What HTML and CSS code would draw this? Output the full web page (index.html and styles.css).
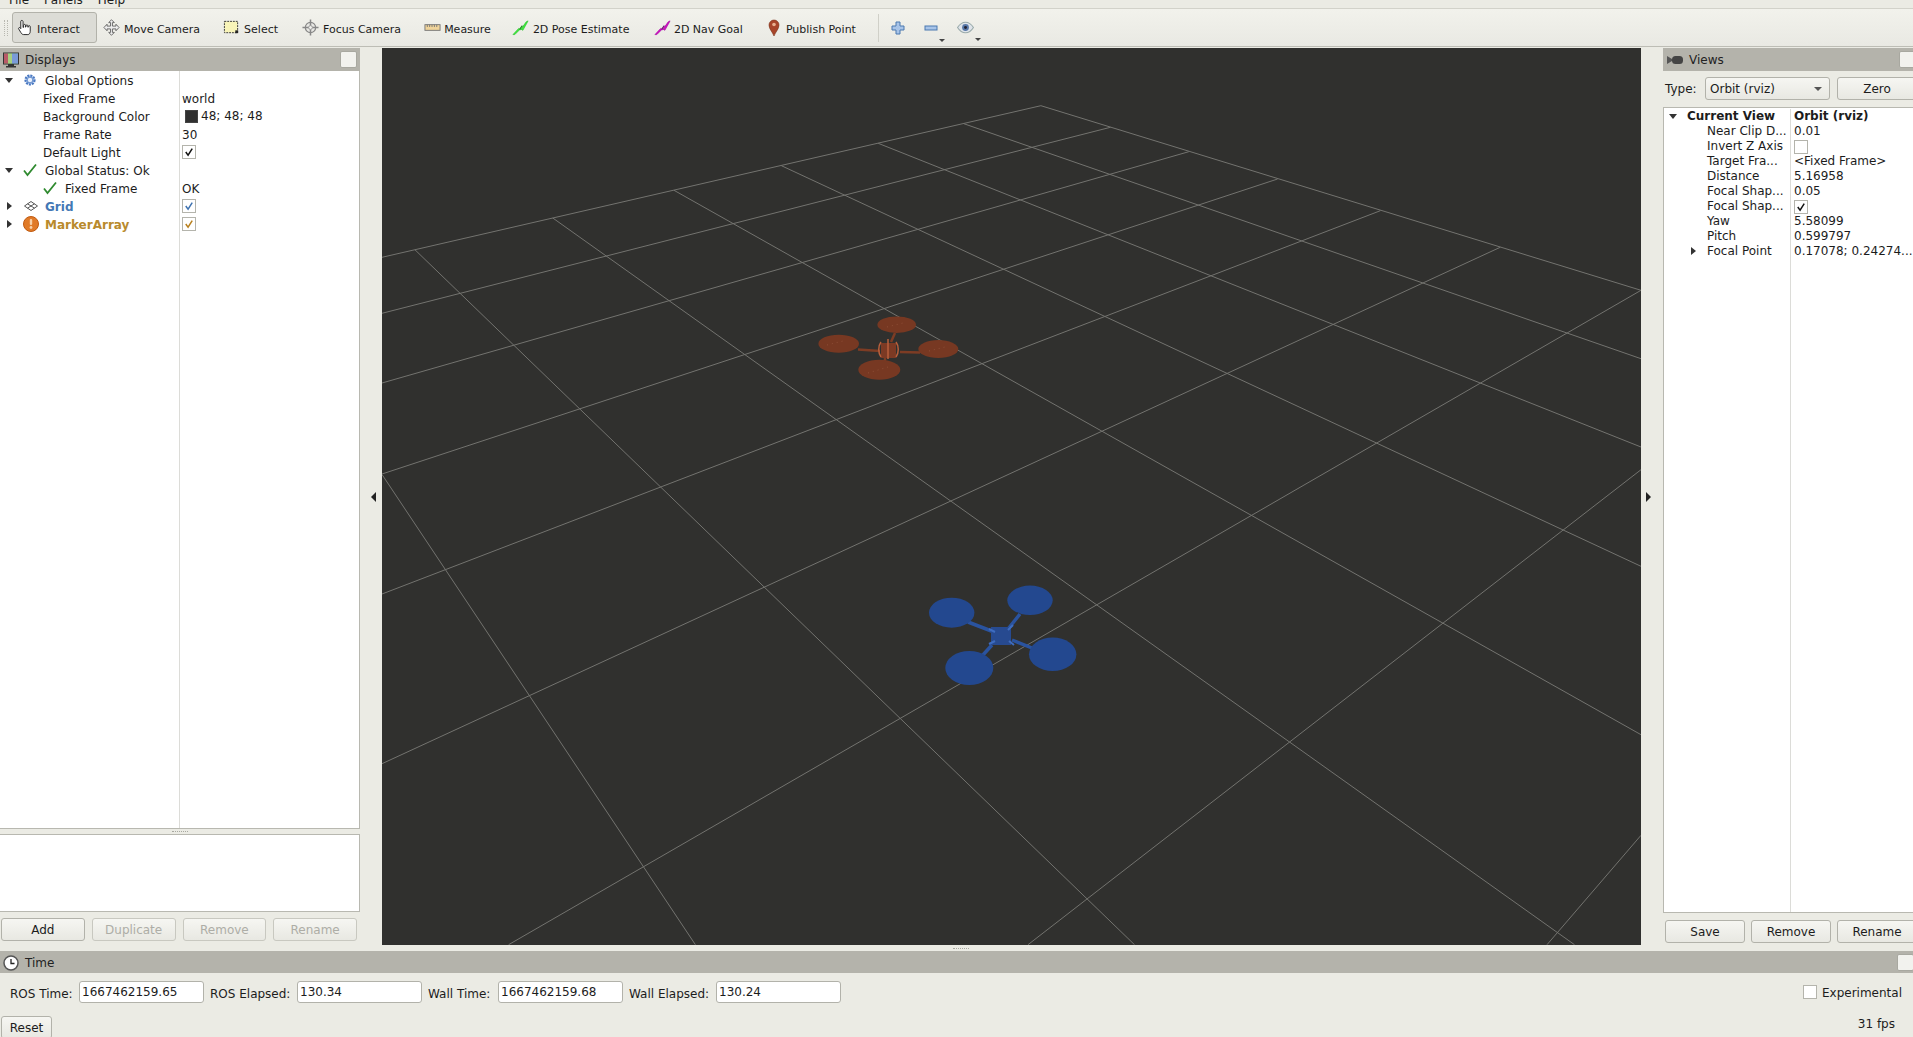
FILE: index.html
```html
<!DOCTYPE html>
<html lang="en">
<head>
<meta charset="utf-8">
<title>RViz</title>
<link rel="stylesheet" href="styles.css">
</head>
<body>
<div class="app">
  <div class="menubar">
    <div class="menu-inner"><span class="menu-item">File</span><span class="menu-item">Panels</span><span class="menu-item">Help</span></div>
  </div>
  <div class="toolbar">
    <div class="grip"></div>
    <div class="tool tool-active">
      <svg class="ico" viewBox="0 0 18 18"><path d="M5 1.500c1 0 1.400.6 1.400 1.500v6l.6-.2V6.600c0-1.200 2-1.200 2 0v2l.5-.1V7.200c0-1.200 2-1.200 2 0v1.500l.5-.1V8c0-1.200 2-1.200 2 0v5c0 2-1 3.500-2.500 3.500H7c-1.500 0-2.200-1-3-2.300L1.800 10.500c-.6-1.200.8-2 1.700-1L4 10.200V3c0-1 .2-1.500 1-1.500z" fill="#fff" stroke="#222" stroke-width="1"/></svg>
      <span>Interact</span>
    </div>
    <div class="tool tool-tight">
      <svg class="ico" viewBox="0 0 18 18"><path d="M9 .8l3 3h-2v3.700h3.700v-2l3.300 3.500-3.300 3.500v-2H10v3.700h2l-3 3-3-3h2v-3.700H4.300v2L1 9l3.300-3.500v2H8V3.800H6z" fill="#eee" stroke="#666" stroke-width="1"/></svg>
      <span>Move Camera</span>
    </div>
    <div class="tool">
      <svg class="ico" viewBox="0 0 18 18"><rect x="1.500" y="2.500" width="14" height="12" fill="#f8f4b8" stroke="#333" stroke-dasharray="2 1"/><rect x="13" y="12" width="3" height="3" fill="#222"/></svg>
      <span>Select</span>
    </div>
    <div class="tool tool-focus">
      <svg class="ico" viewBox="0 0 18 18"><circle cx="9" cy="9" r="5.500" fill="#e8e8e4" stroke="#888" stroke-width="1.300"/><path d="M9 .5v17M.5 9h17" stroke="#888" stroke-width="1.600"/><circle cx="9" cy="9" r="2" fill="#f4f4f0" stroke="#999"/></svg>
      <span>Focus Camera</span>
    </div>
    <div class="tool tool-short">
      <svg class="ico" viewBox="0 0 18 18"><rect x="1" y="6" width="16" height="6" fill="#f0d49a" stroke="#777"/><path d="M3.500 6v2.500M6 6v2.500M8.500 6v2.500M11 6v2.500M13.500 6v2.500" stroke="#777"/></svg>
      <span>Measure</span>
    </div>
    <div class="tool tool-pose">
      <svg class="ico" viewBox="0 0 18 18"><path d="M1 16.500L7 10l2 1.500L15 3l2-1-1 2-4.500 8L9 10.500 3 16.500z" fill="#3fe83f" stroke="#22c022" stroke-width=".6"/><path d="M8 11l3-4" stroke="#128a12" stroke-width="1.200"/></svg>
      <span>2D Pose Estimate</span>
    </div>
    <div class="tool tool-short tool-nav">
      <svg class="ico" viewBox="0 0 18 18"><path d="M1 16.500L7 10l2 1.500L15 3l2-1-1 2-4.500 8L9 10.500 3 16.500z" fill="#d010c0" stroke="#a000a0" stroke-width=".6"/><path d="M8 11l3-4" stroke="#700070" stroke-width="1.200"/></svg>
      <span>2D Nav Goal</span>
    </div>
    <div class="tool tool-pin">
      <svg class="ico-pin" viewBox="0 0 12 18"><path d="M6 17C4.500 13 1 10 1 6a5 5 0 0 1 10 0c0 4-3.500 7-5 11z" fill="#a8452a" stroke="#7a3018" stroke-width=".6"/><circle cx="6" cy="5.500" r="1.800" fill="#e8b090"/></svg>
      <span>Publish Point</span>
    </div>
    <div class="tool-sep"></div>
    <div class="small-tools">
      <svg class="ico-small" viewBox="0 0 14 14"><path d="M5 1h4v4h4v4H9v4H5V9H1V5h4z" fill="#a8c4e8" stroke="#4a78b0"/></svg>
      <div class="drop">
        <svg class="ico-small" viewBox="0 0 14 14"><rect x="1" y="5" width="12" height="4" fill="#a8c4e8" stroke="#4a78b0"/></svg>
        <span class="caret"></span>
      </div>
      <div class="drop">
        <svg class="ico-eye" viewBox="0 0 16 12"><path d="M.5 6C3 2 5.500 1 8 1s5 1 7.500 5c-2.500 4-5 5-7.500 5S3 10 .5 6z" fill="#dfe4ea" stroke="#9aa"/><circle cx="8" cy="6" r="3.200" fill="#5878a8"/><circle cx="8" cy="6" r="1.400" fill="#223"/></svg>
        <span class="caret"></span>
      </div>
    </div>
  </div>

  <div class="main">
    <div class="dock-left">
      <div class="titlebar">
        <svg class="title-ico" viewBox="0 0 16 16"><rect x=".5" y="1" width="15" height="11" fill="#6cb27a" stroke="#333"/><rect x="1" y="1.500" width="4" height="10" fill="#b85a68"/><rect x="5" y="1.500" width="4" height="10" fill="#a8d080"/><rect x="9" y="1.500" width="6" height="10" fill="#7a9ad8"/><rect x="5" y="12" width="6" height="2" fill="#333"/><rect x="3" y="14" width="10" height="1.500" fill="#333"/></svg>
        <span class="title-text">Displays</span>
        <span class="title-btn"></span>
      </div>
      <div class="tree">
        <div class="row">
          <div class="name">
            <span class="arrow-down"></span>
            <svg class="tree-ico" viewBox="0 0 14 14"><circle cx="7" cy="7" r="4.500" fill="#b4cdf0" stroke="#4a78c0" stroke-width="2.200" stroke-dasharray="2 1"/><circle cx="7" cy="7" r="2.800" fill="#e8f0fc" stroke="#4a78c0" stroke-width=".8"/></svg>
            <span class="label-top">Global Options</span>
          </div>
          <div class="val"></div>
        </div>
        <div class="row"><div class="name"><span class="label-child">Fixed Frame</span></div><div class="val"><span class="val-text">world</span></div></div>
        <div class="row"><div class="name"><span class="label-child">Background Color</span></div><div class="val"><span class="swatch"></span><span>48; 48; 48</span></div></div>
        <div class="row"><div class="name"><span class="label-child">Frame Rate</span></div><div class="val"><span class="val-text">30</span></div></div>
        <div class="row"><div class="name"><span class="label-child">Default Light</span></div><div class="val"><span class="check"><svg viewBox="0 0 13 13"><path d="M3 6.500l2.500 3.500L10 2.800" class="tick"/></svg></span></div></div>
        <div class="row">
          <div class="name">
            <span class="arrow-down"></span>
            <svg class="tree-ico" viewBox="0 0 14 14"><path d="M1 7.500l3.500 4.500L13 1.500" fill="none" stroke="#2f8a2f" stroke-width="1.800"/></svg>
            <span class="label-top">Global Status: Ok</span>
          </div>
          <div class="val"></div>
        </div>
        <div class="row">
          <div class="name name-deep">
            <svg class="tree-ico" viewBox="0 0 14 14"><path d="M1 7.500l3.500 4.500L13 1.500" fill="none" stroke="#2f8a2f" stroke-width="1.800"/></svg>
            <span class="label-top">Fixed Frame</span>
          </div>
          <div class="val"><span class="val-text">OK</span></div>
        </div>
        <div class="row">
          <div class="name">
            <span class="arrow-right"></span>
            <svg class="tree-ico" viewBox="0 0 14 14"><path d="M7 2.500L13.500 7 7 11.500.5 7zM3.500 4.800l7 4.400M10.500 4.800l-7 4.400" fill="#fff" stroke="#555"/></svg>
            <span class="label-top grid-name">Grid</span>
          </div>
          <div class="val"><span class="check"><svg viewBox="0 0 13 13"><path d="M3 6.500l2.500 3.500L10 2.800" class="tick tick-blue"/></svg></span></div>
        </div>
        <div class="row">
          <div class="name">
            <span class="arrow-right"></span>
            <svg class="tree-ico tree-ico-lg" viewBox="0 0 16 16"><circle cx="8" cy="8" r="7.500" fill="#e07a28" stroke="#c05a10"/><rect x="6.800" y="3" width="2.400" height="6" rx="1" fill="#f8d0a8"/><circle cx="8" cy="11.500" r="1.400" fill="#f8d0a8"/></svg>
            <span class="label-top marker-name">MarkerArray</span>
          </div>
          <div class="val"><span class="check"><svg viewBox="0 0 13 13"><path d="M3 6.500l2.500 3.500L10 2.800" class="tick tick-amber"/></svg></span></div>
        </div>
        <div class="row-fill"><div class="name"></div></div>
      </div>
      <div class="split-h"><span class="dots"></span></div>
      <div class="desc"></div>
      <div class="btn-row">
        <div class="btn">Add</div>
        <div class="btn btn-off">Duplicate</div>
        <div class="btn btn-off">Remove</div>
        <div class="btn btn-off">Rename</div>
      </div>
    </div>

    <div class="gap gap-left"><span class="tri-left"></span></div>

    <div class="canvas">
      <svg class="scene" viewBox="0 0 1259 897">
        <g class="grid-lines">
          <line x1="0" y1="209.300" x2="658.900" y2="57.700"/>
          <line x1="0" y1="265.300" x2="728.400" y2="79.300"/>
          <line x1="0" y1="335" x2="806.800" y2="103.700"/>
          <line x1="0" y1="426" x2="895.600" y2="131"/>
          <line x1="0" y1="546" x2="998.400" y2="162.700"/>
          <line x1="0" y1="715.700" x2="1118.200" y2="199.300"/>
          <line x1="126.600" y1="896.700" x2="1259" y2="242.300"/>
          <line x1="646" y1="896.700" x2="1259" y2="421.700"/>
          <line x1="1165" y1="896.700" x2="1259" y2="787.300"/>
          <line x1="0" y1="426.500" x2="313.400" y2="896.700"/>
          <line x1="32.900" y1="201.700" x2="752.500" y2="896.700"/>
          <line x1="170.800" y1="170" x2="1192.500" y2="896.700"/>
          <line x1="292" y1="142.300" x2="1259" y2="686.700"/>
          <line x1="399.400" y1="117.700" x2="1259" y2="518.300"/>
          <line x1="496.200" y1="95.300" x2="1259" y2="399"/>
          <line x1="581.800" y1="75.700" x2="1259" y2="310.700"/>
          <line x1="658.900" y1="57.700" x2="1259" y2="242.300"/>
        </g>
        <g class="drone-red">
          <path class="arm-red" d="M476 301.500L498 303M518 304L538 304.500M513 285L509 294M503 308L503 314"/>
          <ellipse cx="514.700" cy="276.700" rx="19.300" ry="8.300"/>
          <ellipse cx="456.700" cy="295.700" rx="20.300" ry="9"/>
          <ellipse cx="556.300" cy="301" rx="20" ry="9"/>
          <ellipse cx="497.300" cy="321.700" rx="21" ry="10"/>
          <rect x="499" y="295" width="15" height="15" class="body-red"/>
          <path class="frame-red" d="M499 294c-3 4-3 11 0 15M514 294c3 4 3 11 0 15M506 291v20"/>
          <path class="specks-red" d="M445 297l16-4M505 279l16-4M547 303l16-4M486 325l20-6"/>
        </g>
        <g class="drone-blue">
          <path class="arm-blue" d="M586 574L612 584M638 566L626 581M630 592L650 600M610 597L600 608"/>
          <ellipse cx="569.700" cy="564.700" rx="22.700" ry="15"/>
          <ellipse cx="648" cy="552.300" rx="22.700" ry="14.700"/>
          <ellipse cx="587.300" cy="620" rx="24" ry="17"/>
          <ellipse cx="670.700" cy="606.300" rx="23.700" ry="16.700"/>
          <rect x="609" y="579" width="20" height="18" class="body-blue"/>
          <path class="frame-blue" d="M607 581l6 3M631 577l-5 5M607 596l6-3M632 597l-5-4"/>
        </g>
      </svg>
    </div>

    <div class="gap gap-right"><span class="tri-right"></span></div>

    <div class="dock-right">
      <div class="titlebar">
        <svg class="title-ico title-cam" viewBox="0 0 16 10"><path d="M0 1l5 3v2l-5 3z" fill="#555"/><rect x="5" y="1" width="11" height="8" rx="3.500" fill="#444"/></svg>
        <span class="title-text">Views</span>
        <span class="title-btn"></span>
      </div>
      <div class="type-row">
        <span class="type-label">Type:</span>
        <div class="combo"><span>Orbit (rviz)</span><span class="caret caret-combo"></span></div>
        <div class="btn btn-zero">Zero</div>
      </div>
      <div class="vtree">
        <div class="vrow"><div class="vname vbold"><span class="varrow-down"></span>Current View</div><div class="vval vbold">Orbit (rviz)</div></div>
        <div class="vrow"><div class="vname">Near Clip D...</div><div class="vval">0.01</div></div>
        <div class="vrow"><div class="vname">Invert Z Axis</div><div class="vval"><span class="check"></span></div></div>
        <div class="vrow"><div class="vname">Target Fra...</div><div class="vval">&lt;Fixed Frame&gt;</div></div>
        <div class="vrow"><div class="vname">Distance</div><div class="vval">5.16958</div></div>
        <div class="vrow"><div class="vname">Focal Shap...</div><div class="vval">0.05</div></div>
        <div class="vrow"><div class="vname">Focal Shap...</div><div class="vval"><span class="check"><svg viewBox="0 0 13 13"><path d="M3 6.500l2.500 3.500L10 2.800" class="tick"/></svg></span></div></div>
        <div class="vrow"><div class="vname">Yaw</div><div class="vval">5.58099</div></div>
        <div class="vrow"><div class="vname">Pitch</div><div class="vval">0.599797</div></div>
        <div class="vrow"><div class="vname"><span class="varrow-right"></span>Focal Point</div><div class="vval">0.17078; 0.24274...</div></div>
        <div class="vfill"></div>
      </div>
      <div class="view-btns">
        <div class="btn btn-view">Save</div>
        <div class="btn btn-view">Remove</div>
        <div class="btn btn-view">Rename</div>
      </div>
    </div>
  </div>

  <div class="split-bottom"><span class="dots"></span></div>

  <div class="time-title">
    <svg class="title-ico" viewBox="0 0 16 16"><circle cx="8" cy="8" r="7" fill="#fff" stroke="#555" stroke-width="1.500"/><path d="M8 4v4.500h3.500" fill="none" stroke="#222" stroke-width="1.300"/></svg>
    <span class="title-text">Time</span>
    <span class="title-btn"></span>
  </div>
  <div class="time-row">
    <span class="tlabel tlabel-ros">ROS Time:</span><div class="field">1667462159.65</div>
    <span class="tlabel tlabel-elapsed">ROS Elapsed:</span><div class="field">130.34</div>
    <span class="tlabel tlabel-wall">Wall Time:</span><div class="field">1667462159.68</div>
    <span class="tlabel tlabel-elapsed">Wall Elapsed:</span><div class="field">130.24</div>
    <div class="spacer"></div>
    <span class="check check-exp"></span><span class="exp-label">Experimental</span>
  </div>
  <div class="status-row">
    <div class="btn btn-reset">Reset</div>
    <span class="fps">31 fps</span>
  </div>
</div>
</body>
</html>
```

FILE: styles.css
```css
html, body { margin: 0; padding: 0; height: 100%; overflow: hidden; }
body { font-family: "DejaVu Sans", sans-serif; font-size: 12px; color: #1c1c1c; background: #ebebe4; }
.app { width: 1913px; height: 1037px; overflow: hidden; background: #ebebe4; }

.menubar { height: 8px; overflow: hidden; background: #ebebe4; border-bottom: 1px solid #d2d2ca; }
.menu-inner { display: flex; margin-top: -8px; padding-left: 9px; line-height: 16px; }
.menu-item { margin-right: 15px; }

.toolbar { height: 37px; display: flex; align-items: center; font-size: 11px; background: linear-gradient(#f2f2ec, #e9e9e3); border-bottom: 1px solid #bdbdb5; margin-bottom: 1px; }
.grip { width: 4px; height: 16px; margin-left: 4px; border-left: 1px dotted #b8b8b0; border-right: 1px dotted #b8b8b0; box-sizing: border-box; }
.tool { display: flex; align-items: center; gap: 4px; height: 31px; padding: 0 11.500px; flex-shrink: 0; box-sizing: border-box; }
.tool span { padding-top: 3px; }
.tool-active { margin-left: 4px; padding: 0 16px 0 4px; background: #dcdcd6; border: 1px solid #b2b2aa; border-radius: 3px; gap: 3px; }
.tool-tight { padding-left: 6px; }
.tool-focus { margin-left: 1px; }
.tool-short { gap: 3px; }
.tool-pose { margin-left: -2px; }
.tool-nav { margin-left: 1.500px; }
.tool-pin { gap: 6px; margin-left: 2px; }
.ico { width: 17px; height: 17px; display: block; }
.ico-pin { width: 12px; height: 18px; display: block; }
.tool-sep { width: 1px; height: 28px; margin-left: 11px; background: #d0d0c8; }
.small-tools { display: flex; align-items: center; margin-left: 12px; gap: 19px; }
.ico-small { width: 14px; height: 14px; display: block; }
.ico-eye { width: 17px; height: 13px; display: block; }
.drop { display: flex; align-items: center; position: relative; }
.caret { width: 0; height: 0; border-left: 3px solid transparent; border-right: 3px solid transparent; border-top: 3px solid #444; }
.drop .caret { position: absolute; right: -7px; bottom: -7px; }

.main { display: flex; height: 897px; }
.dock-left { width: 360px; flex-shrink: 0; display: flex; flex-direction: column; }
.gap { width: 22px; flex-shrink: 0; display: flex; align-items: center; justify-content: center; box-sizing: border-box; }
.gap-left { padding-left: 4px; }
.gap-right { padding-right: 7px; }
.tri-left { width: 0; height: 0; border-top: 5px solid transparent; border-bottom: 5px solid transparent; border-right: 5px solid #222; }
.tri-right { width: 0; height: 0; border-top: 5px solid transparent; border-bottom: 5px solid transparent; border-left: 5px solid #222; }
.canvas { width: 1259px; flex-shrink: 0; background: #30302e; overflow: hidden; }
.scene { display: block; width: 1259px; height: 897px; }
.grid-lines line { stroke: #73736f; stroke-width: 1; }
.drone-red ellipse { fill: #773822; }
.arm-red { stroke: #7d3c24; stroke-width: 2.500; fill: none; }
.body-red { fill: #7c3a24; }
.frame-red { stroke: #b9603c; stroke-width: 1.500; fill: none; }
.specks-red { stroke: #8e4e36; stroke-width: 1; stroke-dasharray: 1 4; fill: none; }
.drone-blue ellipse { fill: #23488f; }
.arm-blue { stroke: #2a539f; stroke-width: 3.500; fill: none; }
.body-blue { fill: #274a90; }
.frame-blue { stroke: #3d6cc0; stroke-width: 2; fill: none; }
.dock-right { width: 256px; flex-shrink: 0; display: flex; flex-direction: column; }

.titlebar { height: 23px; flex-shrink: 0; display: flex; align-items: center; background: #b4b3ab; }
.title-ico { width: 16px; height: 16px; margin-left: 3px; display: block; flex-shrink: 0; }
.title-cam { height: 10px; margin-left: 4px; }
.title-text { margin-left: 6px; flex: 1; color: #222; }
.title-btn { width: 15px; height: 15px; margin-right: 3px; background: #f2f2ee; border: 1px solid #a8a8a0; border-radius: 2px; flex-shrink: 0; }

.tree { flex: 1; display: flex; flex-direction: column; background: #fff; border-right: 1px solid #b8b8b0; border-bottom: 1px solid #b8b8b0; }
.row { display: flex; height: 18px; flex-shrink: 0; }
.name { width: 179px; flex-shrink: 0; display: flex; align-items: center; border-right: 1px solid #dcdcd8; box-sizing: content-box; }
.val { display: flex; align-items: center; padding-left: 2px; }
.val-text { padding-top: 1px; }
.row-fill { flex: 1; display: flex; }
.arrow-down { width: 0; height: 0; margin-left: 5px; border-left: 4.500px solid transparent; border-right: 4.500px solid transparent; border-top: 5px solid #333; }
.arrow-right { width: 0; height: 0; margin-left: 7px; margin-right: 2px; border-top: 4.500px solid transparent; border-bottom: 4.500px solid transparent; border-left: 5px solid #333; }
.tree-ico { width: 14px; height: 14px; margin-left: 10px; flex-shrink: 0; display: block; }
.tree-ico-lg { width: 16px; height: 16px; margin-left: 9px; margin-right: -1px; }
.label-top { margin-left: 8px; padding-top: 1px; white-space: nowrap; }
.label-child { margin-left: 43px; padding-top: 1px; white-space: nowrap; }
.name-deep .tree-ico { margin-left: 43px; }
.grid-name { margin-left: 7px; font-weight: bold; color: #4478b5; }
.marker-name { margin-left: 7px; font-weight: bold; color: #b98a2c; }
.swatch { width: 11px; height: 11px; margin: 0 3px 0 3px; background: #303030; border: 1px solid #444; }
.check { width: 12px; height: 12px; display: block; border: 1px solid #b4b4ac; background: #fff; }
.check svg { display: block; width: 12px; height: 12px; }
.tick { fill: none; stroke: #111; stroke-width: 1.600; }
.tick-blue { stroke: #3f72b0; }
.tick-amber { stroke: #b8801e; }

.split-h { height: 5px; flex-shrink: 0; display: flex; justify-content: center; align-items: center; }
.split-bottom { height: 6px; display: flex; justify-content: center; align-items: center; padding-left: 8px; }
.dots { width: 16px; border-top: 1px dotted #a8a8a0; }
.desc { height: 76px; flex-shrink: 0; background: #fff; border: 1px solid #b8b8b0; border-left: 0; }
.btn-row { display: flex; gap: 7px; padding: 6px 3px 4px 1px; height: 23px; flex-shrink: 0; }
.btn { flex: 1; height: 23px; box-sizing: border-box; display: flex; align-items: center; justify-content: center; background: linear-gradient(#f6f6f2, #e8e8e2); border: 1px solid #b2b2aa; border-radius: 3px; }
.btn-off { color: #adada6; border-color: #c8c8c0; }

.type-row { display: flex; align-items: center; gap: 7px; height: 23px; padding: 6px 0 7px 2px; flex-shrink: 0; }
.type-label { width: 33px; }
.combo { width: 125px; height: 23px; box-sizing: border-box; padding: 0 7px 0 4px; display: flex; align-items: center; justify-content: space-between; background: linear-gradient(#f6f6f2, #e8e8e2); border: 1px solid #b2b2aa; border-radius: 3px; }
.caret-combo { border-left-width: 4px; border-right-width: 4px; border-top-width: 4px; border-top-color: #555; }
.btn-zero { flex: none; width: 80px; }
.vtree { flex: 1; display: flex; flex-direction: column; padding-top: 1px; background: #fff; border: 1px solid #b8b8b0; border-right: 0; }
.vrow { display: flex; height: 15px; line-height: 15px; flex-shrink: 0; white-space: nowrap; }
.vname { width: 127px; flex-shrink: 0; padding-left: 43px; box-sizing: border-box; border-right: 1px solid #dcdcd8; position: relative; }
.vname.vbold { padding-left: 23px; }
.vbold { font-weight: bold; }
.vval { padding-left: 3px; display: flex; align-items: center; }
.vfill { flex: 1; width: 127px; box-sizing: border-box; border-right: 1px solid #dcdcd8; }
.varrow-down { position: absolute; left: 5px; top: 5px; width: 0; height: 0; border-left: 4px solid transparent; border-right: 4px solid transparent; border-top: 5px solid #333; }
.varrow-right { position: absolute; left: 27px; top: 3px; width: 0; height: 0; border-top: 4px solid transparent; border-bottom: 4px solid transparent; border-left: 5px solid #333; }
.view-btns { display: flex; gap: 6px; padding: 7px 0 2px 2px; height: 23px; flex-shrink: 0; }
.btn-view { flex: none; width: 80px; }

.time-title { height: 22px; box-sizing: border-box; padding-top: 1px; display: flex; align-items: center; background: #b4b3ab; margin-right: -4px; }
.time-row { display: flex; align-items: center; height: 22px; padding-top: 8px; }
.tlabel { margin-left: 6px; margin-right: 7px; padding-top: 3px; white-space: nowrap; flex-shrink: 0; }
.tlabel-ros { margin-left: 10px; width: 62px; }
.tlabel-elapsed { width: 80px; }
.tlabel-wall { width: 63px; }
.field { width: 125px; height: 22px; box-sizing: border-box; padding-left: 2px; line-height: 21px; background: #fff; border: 1px solid #b2b2aa; border-radius: 3px; flex-shrink: 0; }
.spacer { flex: 1; }
.check-exp { flex-shrink: 0; }
.exp-label { margin-left: 5px; margin-right: 11px; padding-top: 1px; }
.status-row { display: flex; justify-content: space-between; padding: 13px 0 0 1px; }
.btn-reset { flex: none; width: 51px; height: 23px; }
.fps { margin-top: 1px; margin-right: 18px; line-height: 14px; }
```
